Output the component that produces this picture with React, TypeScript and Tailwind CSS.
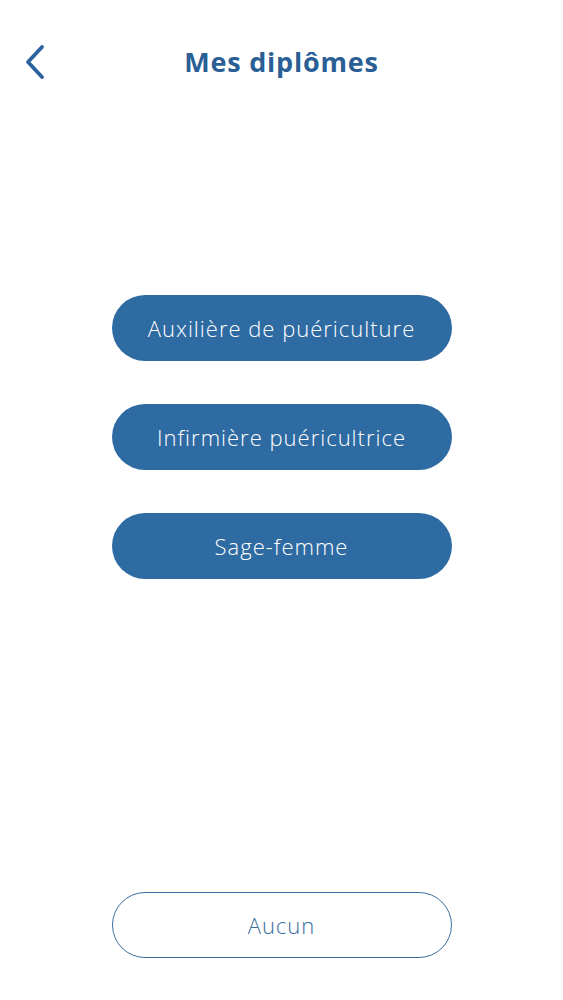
import React from "react";

export default function App() {
  const items = ["Auxilière de puériculture", "Infirmière puéricultrice", "Sage-femme"];
  return (
    <div className="flex min-h-[1000px] w-full flex-col bg-white" style={{ fontFamily: "'Open Sans', Lato, sans-serif" }}>
      <div className="relative flex h-[62px] items-center justify-center mt-[31px]">
        <button className="absolute left-[20px] top-[12px] flex h-[38px] w-[30px] items-center justify-center">
          <svg width="24" height="36" viewBox="0 0 24 36" fill="none">
            <path d="M19 3 L5 18 L19 33" stroke="#2c62a0" strokeWidth="3.8" strokeLinecap="round" strokeLinejoin="round" />
          </svg>
        </button>
        <h1 className="text-[27px] font-bold tracking-[0.8px] text-[#2a5f96]">Mes diplômes</h1>
      </div>
      <div className="mt-[202px] flex flex-col items-center gap-[43px]">
        {items.map((t) => (
          <button key={t} className="flex h-[66px] w-[340px] items-center justify-center rounded-full bg-[#2f6ba3] text-[22px] font-light tracking-[1px] text-white">
            {t}
          </button>
        ))}
      </div>
      <div className="flex-1" />
      <div className="flex justify-center pb-[42px]">
        <button className="flex h-[66px] w-[340px] items-center justify-center rounded-full border-[1.5px] border-[#3c6f9f] text-[22px] font-light tracking-[1px] text-[#3a6d9c]">
          Aucun
        </button>
      </div>
    </div>
  );
}
